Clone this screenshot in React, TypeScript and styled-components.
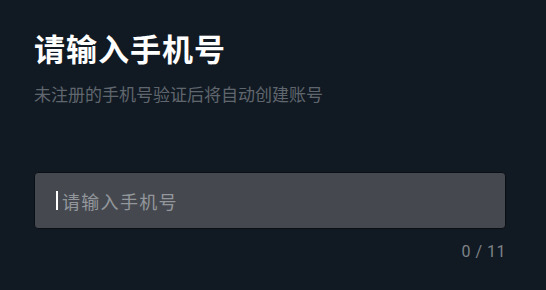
import { useState } from 'react'
import styled, { createGlobalStyle } from 'styled-components'

const GlobalStyle = createGlobalStyle`
  html, body {
    margin: 0;
    padding: 0;
    background: #111a23;
  }
  body {
    font-family: Roboto, 'Noto Sans CJK SC', sans-serif;
  }
`

const MAX = 11

export default function App() {
  const [phone, setPhone] = useState('')

  return (
    <>
      <GlobalStyle />
      <Page>
        <Title>请输入手机号</Title>
        <Hint>未注册的手机号验证后将自动创建账号</Hint>
        <Field>
          <Caret />
          <Input
            value={phone}
            maxLength={MAX}
            placeholder="请输入手机号"
            onChange={e => setPhone(e.target.value.replace(/\D/g, ''))}
          />
        </Field>
        <Counter>
          {phone.length} / {MAX}
        </Counter>
      </Page>
    </>
  )
}

const Page = styled.main`
  width: 546px;
  height: 290px;
  box-sizing: border-box;
  padding: 28px 40px 0 34px;
  display: flex;
  flex-direction: column;
  background: #111a23;
`

const Title = styled.h1`
  margin: 0;
  font-family: 'Noto Sans CJK SC', sans-serif;
  font-size: 31px;
  font-weight: 700;
  line-height: 40px;
  color: #ffffff;
  letter-spacing: 1px;
`

const Hint = styled.p`
  margin: 15px 0 0;
  font-family: 'Noto Sans CJK SC', sans-serif;
  font-size: 17px;
  line-height: 22px;
  color: #60666d;
`

const Field = styled.label`
  flex: none;
  margin-top: 67px;
  height: 57px;
  box-sizing: border-box;
  display: flex;
  align-items: center;
  padding: 0 20px 0 21px;
  background: #45494f;
  border: 1px solid #0a0f15;
  border-radius: 4px;
`

const Caret = styled.span`
  width: 2px;
  height: 19px;
  background: #ffffff;
  flex: none;
`

const Input = styled.input`
  flex: 1;
  min-width: 0;
  margin-left: 4px;
  border: 0;
  outline: none;
  background: transparent;
  caret-color: transparent;
  font-family: 'Noto Sans CJK SC', sans-serif;
  font-size: 18px;
  color: #ffffff;
  letter-spacing: 1.3px;
  padding: 0;

  &::placeholder {
    color: #93979c;
  }
`

const Counter = styled.div`
  flex: none;
  margin-top: 13px;
  align-self: flex-end;
  font-family: Roboto, sans-serif;
  font-size: 16px;
  line-height: 20px;
  color: #7e8287;
  letter-spacing: 0.5px;
`
